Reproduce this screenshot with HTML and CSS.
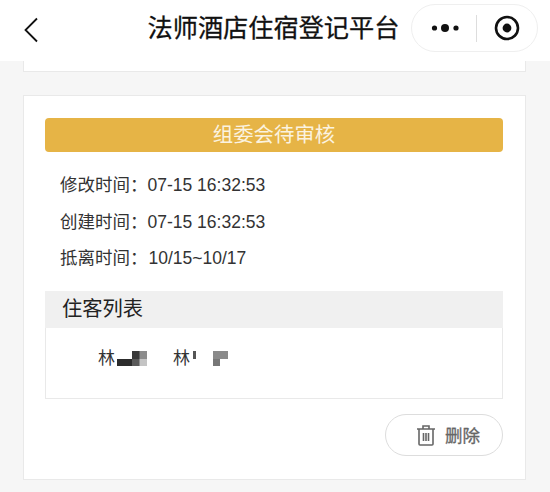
FILE: index.html

```html
<!DOCTYPE html>
<html lang="zh-CN">
<head>
  <meta charset="UTF-8">
  <title>法师酒店住宿登记平台</title>
  <link rel="stylesheet" href="styles.css">
</head>
<body>
  <header class="topbar">
    <svg class="back-icon" width="16" height="28" viewBox="0 0 16 28">
      <path d="M14 2.500 L2.500 14 L14 25.500" fill="none" stroke="#111" stroke-width="1.800"/>
    </svg>
    <h1 class="title">法师酒店住宿登记平台</h1>
    <div class="capsule">
      <svg width="30" height="10" viewBox="0 0 30 10">
        <circle cx="3.5" cy="5" r="2.6" fill="#111"/>
        <circle cx="14" cy="5" r="4" fill="#111"/>
        <circle cx="25" cy="5" r="2.6" fill="#111"/>
      </svg>
      <span class="capsule-line"></span>
      <svg width="26" height="26" viewBox="0 0 26 26">
        <circle cx="13" cy="13" r="11" fill="none" stroke="#111" stroke-width="2.6"/>
        <circle cx="13" cy="13" r="4.4" fill="#111"/>
      </svg>
    </div>
  </header>

  <div class="container">
    <div class="card card-prev"></div>

    <div class="card">
      <div class="status">组委会待审核</div>
      <div class="info">
        <p>修改时间：07-15 16:32:53</p>
        <p>创建时间：07-15 16:32:53</p>
        <p>抵离时间：<span class="val-date">10/15~10/17</span></p>
      </div>

      <div class="guests">
        <div class="guests-head">住客列表</div>
        <div class="guests-body">
          <div class="guest">
            <span>林</span>
            <svg width="30" height="15" viewBox="0 0 30 15">
              <rect x="15" y="0" width="8" height="8" fill="#3a3a3a"/>
              <rect x="22.500" y="0" width="8" height="8" fill="#8c8c8c"/>
              <rect x="0" y="8" width="15" height="7" fill="#2c2c2c"/>
              <rect x="15" y="8" width="8" height="7" fill="#5a5a5a"/>
              <rect x="22.500" y="8" width="8" height="7" fill="#c4c4c4"/>
            </svg>
          </div>
          <div class="guest">
            <span>林</span>
            <svg width="41" height="15" viewBox="0 0 41 15">
              <rect x="1" y="0" width="3" height="8" fill="#555"/>
              <rect x="21" y="0" width="15" height="8" fill="#8a8a8a"/>
              <rect x="21" y="8" width="7" height="7" fill="#777"/>
            </svg>
          </div>
        </div>
      </div>

      <div class="actions">
        <button class="delete-btn">
          <svg width="20" height="22" viewBox="0 0 20 22">
            <path d="M1 5 H19 M7 5 V2 H13 V5 M3 5 V20 Q3 21 4 21 H16 Q17 21 17 20 V5 M7.500 9 V17 M10 9 V17 M12.500 9 V17" fill="none" stroke="#666" stroke-width="1.600"/>
          </svg>
          <span>删除</span>
        </button>
      </div>
    </div>
  </div>
</body>
</html>
```

FILE: styles.css

```css
body {
  margin: 0;
  padding: 0;
  background-color: #f6f6f6;
  font-family: "Liberation Sans", "Noto Sans CJK SC", sans-serif;
  color: #333;
  overflow: hidden;
}
.topbar {
  height: 61px;
  background-color: white;
  display: flex;
  align-items: center;
  padding: 0 12px 5px 23px;
  box-sizing: border-box;
}
.back-icon {
  flex-shrink: 0;
  margin-top: 3px;
}
.title {
  margin: 0 0 0 108.500px;
  font-size: 25.200px;
  line-height: 54px;
  font-weight: 400;
  color: #111;
  white-space: nowrap;
  -webkit-text-stroke: 0.3px #111;
}
.capsule {
  margin-left: 12px;
  width: 127px;
  height: 48px;
  box-sizing: border-box;
  border: 1px solid #efefef;
  border-radius: 24px;
  display: flex;
  align-items: center;
  justify-content: space-between;
  padding: 0 17px 0 19px;
  flex-shrink: 0;
}
.capsule-line {
  width: 1px;
  height: 27px;
  background-color: #ddd;
  margin-right: 3px;
}
.container {
  padding: 0 24px 0 23px;
}
.card {
  background-color: white;
  border: 1px solid #e9e9e9;
  padding: 22px 22px 22px 21px;
  height: 385px;
  box-sizing: border-box;
}
.card-prev {
  height: 11px;
  padding: 0;
  border-top: none;
  margin-bottom: 23px;
}
.status {
  height: 34px;
  line-height: 34px;
  background-color: #e6b446;
  border-radius: 4px;
  color: #fbf3e0;
  font-size: 20.400px;
  text-align: center;
}
.info {
  padding: 15px 0 0 15px;
  font-size: 17.500px;
  color: #333;
}
.info p {
  margin: 0;
  height: 36.500px;
  line-height: 36.500px;
  white-space: nowrap;
}
.val-date {
  margin-left: 1px;
}
.guests {
  margin-top: 14px;
  height: 108px;
  box-sizing: border-box;
  border: 1px solid #e9e9e9;
  border-top: none;
}
.guests-head {
  height: 37px;
  line-height: 37px;
  background-color: #f0f0f0;
  padding-left: 17px;
  margin: 0 -1px;
  font-size: 20.300px;
  color: #222;
}
.guests-body {
  display: flex;
  padding: 19px 0 0 52px;
}
.guest {
  display: flex;
  align-items: center;
  font-size: 17px;
  color: #333;
  width: 75px;
  height: 20px;
}
.guest svg {
  margin: 3px 0 0 2px;
}
.actions {
  display: flex;
  justify-content: flex-end;
  margin-top: 15px;
}
.delete-btn {
  width: 118px;
  height: 42px;
  background-color: white;
  border: 1px solid #ddd;
  border-radius: 21px;
  display: flex;
  align-items: center;
  padding: 0 0 0 30px;
  gap: 9px;
  font-family: inherit;
  font-size: 17.500px;
  color: #666;
  -webkit-text-stroke: 0.3px #666;
  cursor: pointer;
}
```
